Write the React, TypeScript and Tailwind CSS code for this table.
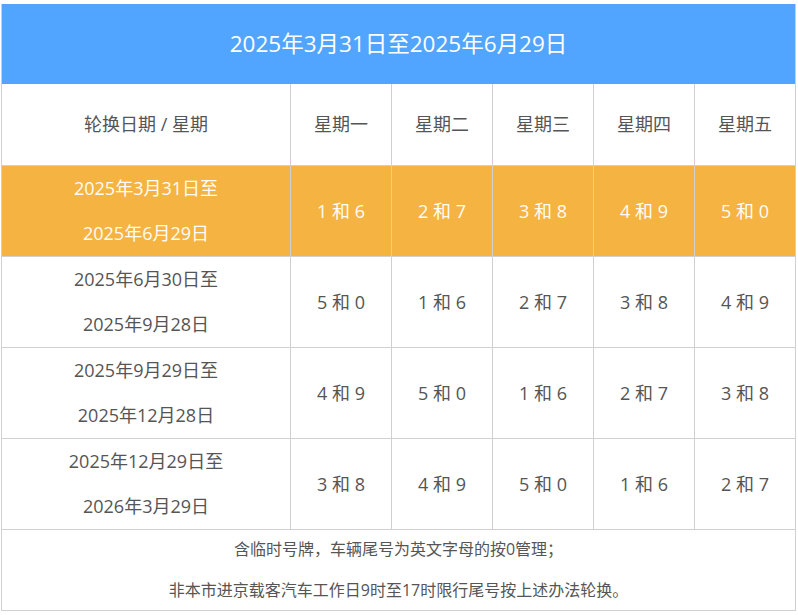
import React from 'react'

const rows = [
  { from: '2025年3月31日至', to: '2025年6月29日', nums: ['1 和 6', '2 和 7', '3 和 8', '4 和 9', '5 和 0'], current: true },
  { from: '2025年6月30日至', to: '2025年9月28日', nums: ['5 和 0', '1 和 6', '2 和 7', '3 和 8', '4 和 9'] },
  { from: '2025年9月29日至', to: '2025年12月28日', nums: ['4 和 9', '5 和 0', '1 和 6', '2 和 7', '3 和 8'] },
  { from: '2025年12月29日至', to: '2026年3月29日', nums: ['3 和 8', '4 和 9', '5 和 0', '1 和 6', '2 和 7'] },
]

const days = ['星期一', '星期二', '星期三', '星期四', '星期五']

const font = { fontFamily: '"Open Sans", "Noto Sans CJK SC", sans-serif' }

export default function App() {
  return (
    <div className="bg-white w-[798px] h-[615px] pt-[4px] pl-[1px]" style={font}>
      <div className="w-[795px] border-l border-r border-b border-[#d0d0d0]">
        {/* Title */}
        <div className="h-[80px] bg-[#52a5fe] flex items-center justify-center text-white text-[22.5px]">
          2025年3月31日至2025年6月29日
        </div>

        <div className="grid grid-cols-[289px_101px_101px_101px_101px_1fr] text-[#555] text-[18px]">
          {/* Header row */}
          <div className="h-[81px] flex items-center justify-center border-r border-[#d0d0d0]">轮换日期 / 星期</div>
          {days.map((d, i) => (
            <div key={d} className={`h-[81px] flex items-center justify-center ${i < 4 ? 'border-r border-[#d0d0d0]' : ''}`}>
              {d}
            </div>
          ))}

          {rows.map((r, ri) => {
            const bg = r.current ? 'bg-[#f5b342] text-[#fffdf5]' : 'bg-white'
            return (
              <React.Fragment key={ri}>
                <div className={`h-[91px] border-t border-r border-[#d0d0d0] flex flex-col items-center justify-center leading-[45px] ${bg}`}>
                  <div>{r.from}</div>
                  <div>{r.to}</div>
                </div>
                {r.nums.map((n, i) => (
                  <div
                    key={i}
                    className={`h-[91px] border-t border-[#d0d0d0] flex items-center justify-center ${i < 4 ? 'border-r' : ''} ${bg}`}
                  >
                    {n}
                  </div>
                ))}
              </React.Fragment>
            )
          })}
        </div>

        {/* Notes */}
        <div className="h-[81px] border-t border-[#d0d0d0] flex flex-col items-center justify-center text-[#555] text-[16px] leading-[41px]">
          <div>含临时号牌，车辆尾号为英文字母的按0管理；</div>
          <div>非本市进京载客汽车工作日9时至17时限行尾号按上述办法轮换。</div>
        </div>
      </div>
    </div>
  )
}
